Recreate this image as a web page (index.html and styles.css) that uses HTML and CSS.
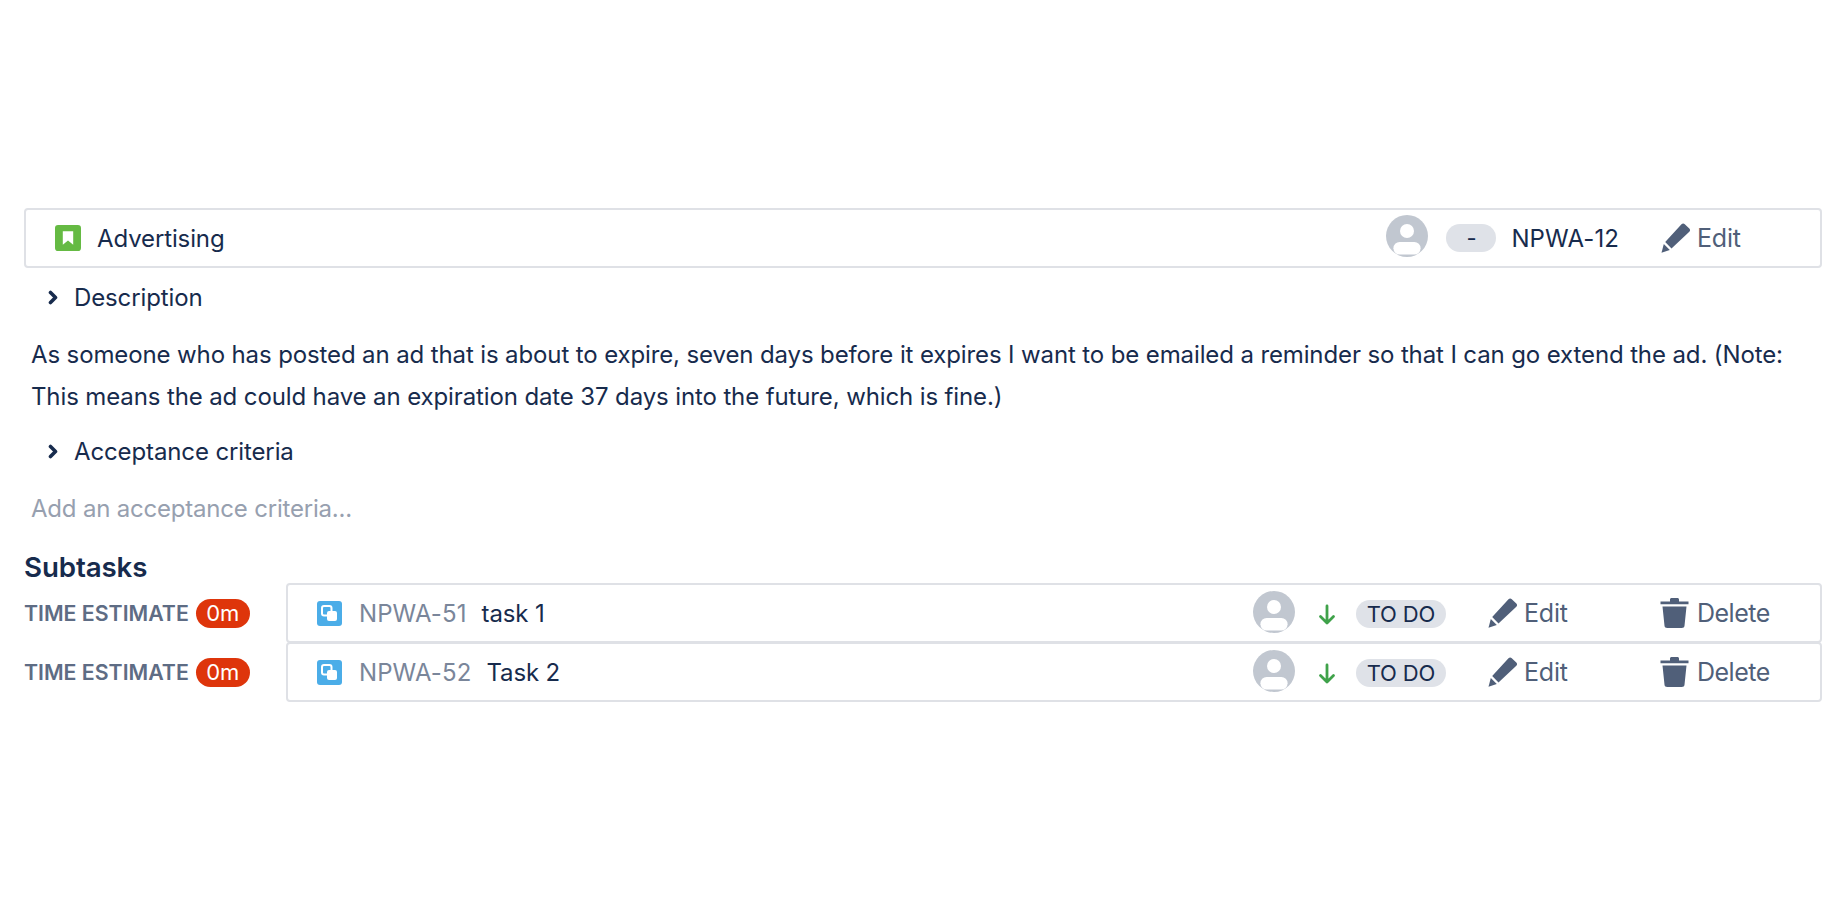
FILE: index.html
```html
<!DOCTYPE html>
<html lang="en">
<head>
<meta charset="utf-8">
<title>Advertising</title>
<link rel="stylesheet" href="styles.css">
</head>
<body>
<svg class="defs" width="0" height="0" aria-hidden="true">
  <defs>
    <symbol id="avatar" viewBox="0 0 42 42">
      <circle cx="21" cy="21" r="21" fill="#c1c7d0"/>
      <circle cx="21" cy="16" r="7" fill="#fff"/>
      <rect x="7.400" y="27" width="27.200" height="12.600" rx="6.300" fill="#fff"/>
    </symbol>
    <symbol id="pencil" viewBox="0 0 30 30">
      <path d="M21 1.200c1-1 2.300-1 3.300 0l4.500 4.300c1 1 1 2.300 0 3.300L11 25.500 4.700 19z" fill="#505f79"/>
      <path d="M3.300 21l6 5.900-8.300 2.900z" fill="#505f79"/>
    </symbol>
    <symbol id="trash" viewBox="0 0 28 30">
      <path d="M0 3.500h9.500V1.500C9.500.7 10.200 0 11 0h6c.8 0 1.500.7 1.500 1.500v2H28v2.800H0z" fill="#505f79"/>
      <path d="M2 8.500h24l-2 19.200c-.1 1.300-1.200 2.300-2.700 2.300H6.700C5.200 30 4.100 29 4 27.700z" fill="#505f79"/>
    </symbol>
    <symbol id="subtask" viewBox="0 0 25 25">
      <rect width="25" height="25" rx="3" fill="#4bade8"/>
      <rect x="5" y="5" width="9.500" height="9.500" rx="2" fill="none" stroke="#fff" stroke-width="2"/>
      <rect x="10" y="10" width="10" height="10" rx="2" fill="#fff"/>
    </symbol>
    <symbol id="arrow" viewBox="0 0 18 22">
      <path d="M9 2v17M2.500 12.500L9 19l6.500-6.500" fill="none" stroke="#3fa24a" stroke-width="2.800" stroke-linecap="round" stroke-linejoin="round"/>
    </symbol>
    <symbol id="chevron" viewBox="0 0 11 15">
      <path d="M2.500 2.500l5 5-5 5" fill="none" stroke="#172b4d" stroke-width="3.600" stroke-linecap="round" stroke-linejoin="round"/>
    </symbol>
  </defs>
</svg>

<main class="page">
  <div class="card story">
    <svg class="story-icon" viewBox="0 0 25 25">
      <rect width="25" height="25" rx="3" fill="#65ba43"/>
      <path d="M7.500 6h10v13l-5-4-5 4z" fill="#fff"/>
    </svg>
    <span class="story-title">Advertising</span>
    <svg class="avatar"><use href="#avatar"/></svg>
    <span class="pill story-pill">-</span>
    <span class="story-key">NPWA-12</span>
    <span class="action story-edit"><svg class="pencil"><use href="#pencil"/></svg>Edit</span>
  </div>

  <div class="toggle first"><svg class="chevron"><use href="#chevron"/></svg>Description</div>
  <p class="description">As someone who has posted an ad that is about to expire, seven days before it expires I want to be emailed a reminder so that I can go extend the ad. (Note: This means the ad could have an expiration date 37 days into the future, which is fine.)</p>
  <div class="toggle"><svg class="chevron"><use href="#chevron"/></svg>Acceptance criteria</div>
  <div class="placeholder">Add an acceptance criteria...</div>

  <h2 class="heading">Subtasks</h2>
  <div class="subtask-row">
    <div class="estimate"><span class="estimate-label">TIME ESTIMATE</span><span class="badge">0m</span></div>
    <div class="card task">
      <svg class="task-icon"><use href="#subtask"/></svg>
      <span class="task-key">NPWA-51</span>
      <span class="task-name">task 1</span>
      <svg class="avatar"><use href="#avatar"/></svg>
      <svg class="arrow"><use href="#arrow"/></svg>
      <span class="pill status">TO DO</span>
      <span class="action task-edit"><svg class="pencil"><use href="#pencil"/></svg>Edit</span>
      <span class="action task-delete"><svg class="trash"><use href="#trash"/></svg>Delete</span>
    </div>
  </div>
  <div class="subtask-row">
    <div class="estimate"><span class="estimate-label">TIME ESTIMATE</span><span class="badge">0m</span></div>
    <div class="card task">
      <svg class="task-icon"><use href="#subtask"/></svg>
      <span class="task-key">NPWA-52</span>
      <span class="task-name">Task 2</span>
      <svg class="avatar"><use href="#avatar"/></svg>
      <svg class="arrow"><use href="#arrow"/></svg>
      <span class="pill status">TO DO</span>
      <span class="action task-edit"><svg class="pencil"><use href="#pencil"/></svg>Edit</span>
      <span class="action task-delete"><svg class="trash"><use href="#trash"/></svg>Delete</span>
    </div>
  </div>
</main>
</body>
</html>
```

FILE: styles.css
```css
* { box-sizing: border-box; }
html, body { margin: 0; background: #fff; }
body {
  font-family: Inter, "Liberation Sans", sans-serif;
  font-size: 24px;
  letter-spacing: -0.12px;
  color: #172b4d;
  overflow: hidden;
  height: 900px;
}
.defs { display: block; height: 0; }
.page { padding: 208px 18px 0 24px; }
.card {
  display: flex;
  align-items: center;
  border: 2px solid #dfe1e6;
  border-radius: 4px;
  background: #fff;
}
.story { height: 60px; padding-left: 29px; }
.story-icon { width: 26px; height: 26px; flex: none; }
.story-title { margin-left: 16px; }
.avatar { width: 42px; height: 42px; flex: none; }
.story .avatar { margin-left: auto; margin-top: -5px; }
.pill {
  display: inline-flex;
  align-items: center;
  justify-content: center;
  height: 28px;
  border-radius: 14px;
  background: #dfe2e8;
}
.story-pill { width: 50px; margin-left: 18px; font-size: 22px; }
.story-key { margin-left: 15px; letter-spacing: 0.1px; }
.action { display: inline-flex; align-items: center; color: #505f79; font-size: 25px; letter-spacing: -0.2px; }
.pencil { width: 31px; height: 30px; flex: none; margin-right: 6px; }
.trash { width: 29px; height: 30px; flex: none; margin-right: 8px; }
.story-edit { margin-left: 41px; width: 160px; }
.toggle { display: flex; align-items: center; height: 30px; margin-top: 19px; }
.toggle.first { margin-top: 14px; }
.chevron { width: 11px; height: 15px; flex: none; margin: 0 15px 0 24px; }
.description { margin: 22px 0 0 7px; line-height: 41.5px; }
.placeholder { margin: 28px 0 0 7px; height: 30px; line-height: 30px; color: #97a0af; letter-spacing: -0.2px; }
.heading { margin: 28px 0 0; font-size: 27.700px; line-height: 31px; font-weight: 600; }
.subtask-row { display: flex; align-items: center; }
.subtask-row + .subtask-row { margin-top: -1px; }
.estimate { display: flex; align-items: center; width: 262px; flex: none; }
.estimate-label { font-size: 21.300px; font-weight: 600; color: #5e6c84; white-space: nowrap; letter-spacing: 0; }
.badge {
  display: inline-flex;
  align-items: center;
  justify-content: center;
  width: 54px;
  height: 29px;
  margin-left: 7px;
  border-radius: 15px;
  background: #de350b;
  color: #fff;
  font-size: 22px;
}
.task { flex: 1; height: 60px; padding-left: 29px; }
.task-icon { width: 25px; height: 25px; flex: none; }
.task-key { margin-left: 17px; color: #7a869a; letter-spacing: 0.1px; }
.task-name { margin-left: 15px; }
.task .avatar { margin-left: auto; margin-top: -3px; }
.arrow { width: 18px; height: 22px; flex: none; margin-left: 23px; margin-top: 4px; }
.status { width: 90px; margin-left: 20px; font-size: 22px; margin-top: 2px; }
.task-edit { margin-left: 41px; width: 173px; }
.task-delete { width: 160px; letter-spacing: -0.5px; }
```
